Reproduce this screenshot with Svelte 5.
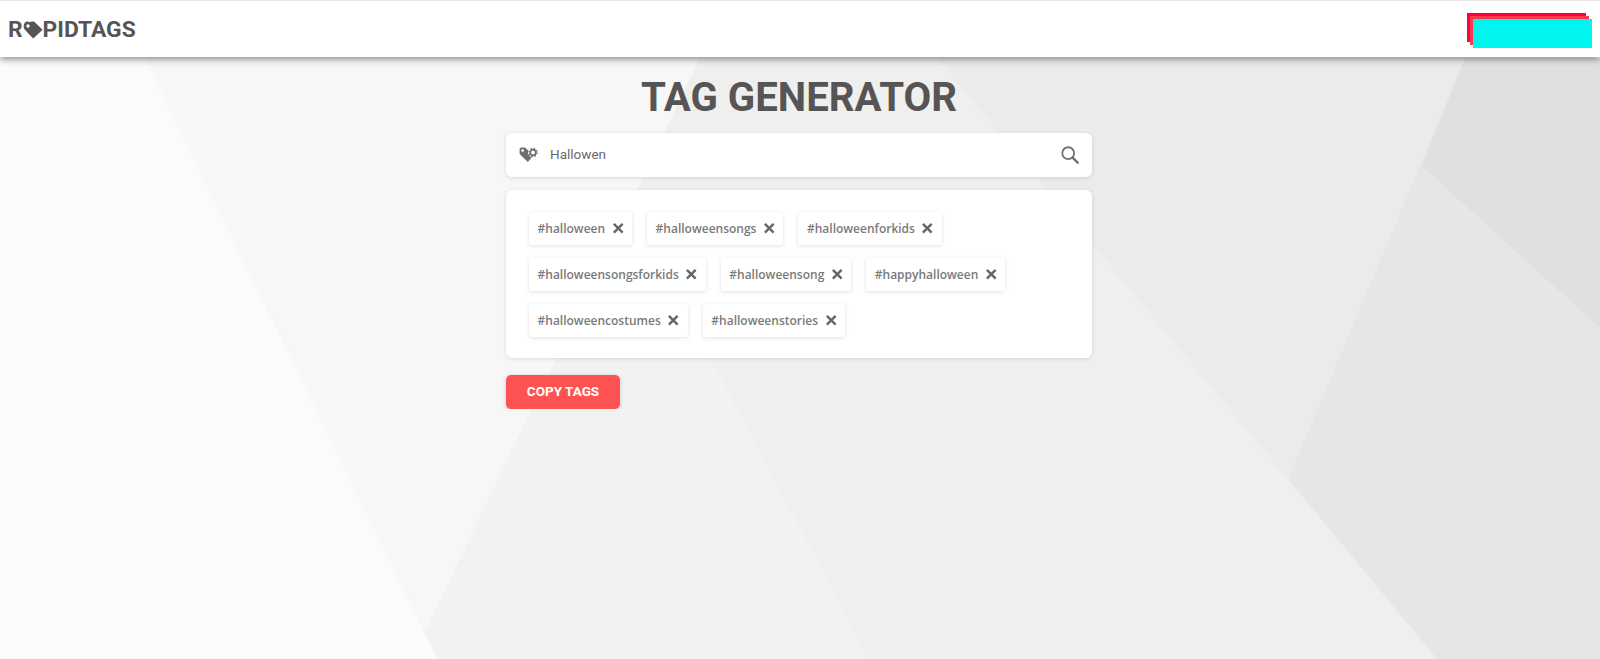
<script lang="ts">
	const tags = [
		'#halloween',
		'#halloweensongs',
		'#halloweenforkids',
		'#halloweensongsforkids',
		'#halloweensong',
		'#happyhalloween',
		'#halloweencostumes',
		'#halloweenstories'
	];
</script>

<svg class="backdrop" viewBox="0 0 1600 659" preserveAspectRatio="none" aria-hidden="true">
	<rect width="1600" height="659" fill="#fbfbfb" />
	<polygon points="145,58 1600,58 1600,659 438,659" fill="#efefed" />
	<polygon points="630,206 869,659 438,659 425,632" fill="#f2f2f0" />
	<polygon points="145,58 700,58 425,632" fill="#f7f7f7" />
	<polygon points="1288,479 1465,58 1600,58 1600,659 1437,659" fill="#e6e6e6" />
	<polygon points="937,58 1465,58 1288,479" fill="#ebebeb" />
	<polygon points="1465,58 1600,58 1600,328 1422,166" fill="#e0e0e0" />
</svg>

<header class="topbar">
	<div class="logo">
		<span>R</span>
		<svg class="logo-tag" viewBox="0 0 20 18" aria-hidden="true">
			<path d="M1.800 1.800C3 .3 5.200 .2 6.700 1.200L8.500 .4 11 .6 19.600 8.800 10.200 17.400 1.600 8.500C.2 6.600 .4 3.500 1.800 1.800Z" fill="#555" />
			<circle cx="5" cy="5" r="1.700" fill="#fff" />
		</svg>
		<span>PIDTAGS</span>
	</div>
	<div class="redacted"></div>
</header>

<main class="page">
	<h1>TAG GENERATOR</h1>

	<div class="search card">
		<svg class="search-tag" viewBox="0 0 19 16" aria-hidden="true">
			<path d="M.6 2.400C.6 1.200 1.400 .5 2.500 .5L6 .5 9.200 3.400 9 6.500 13.500 9.500 8.800 15 1.200 7.600C.7 7.100 .6 6.600 .6 6Z" fill="#6f6f6f" />
			<circle cx="3.600" cy="3.600" r="1.300" fill="#fff" />
			<circle cx="14" cy="5.500" r="4.800" fill="#fff" />
			<circle cx="14" cy="5.500" r="2.800" fill="none" stroke="#6f6f6f" stroke-width="1.800" />
			<circle cx="14" cy="5.500" r="4.100" fill="none" stroke="#6f6f6f" stroke-width="1.200" stroke-dasharray="1.600 1.620" />
		</svg>
		<span class="query">Hallowen</span>
		<svg class="search-icon" viewBox="0 0 20 20" aria-hidden="true">
			<circle cx="8" cy="8" r="6.600" fill="none" stroke="#707070" stroke-width="2" />
			<path d="M12.900 12.900 18.500 18.500" stroke="#707070" stroke-width="2.600" stroke-linecap="round" />
		</svg>
	</div>

	<div class="tags card">
		{#each tags as tag}
			<span class="tag">
				{tag}
				<svg class="remove" viewBox="0 0 12 12" aria-hidden="true">
					<path d="M1 1 11 11M11 1 1 11" stroke="#666" stroke-width="2.800" />
				</svg>
			</span>
		{/each}
	</div>

	<button class="copy">COPY TAGS</button>
</main>

<style>
	:global(body) {
		margin: 0;
		background: #fbfbfb;
	}

	.backdrop {
		position: absolute;
		top: 0;
		left: 0;
		width: 1600px;
		height: 659px;
	}

	.topbar {
		position: relative;
		display: flex;
		align-items: center;
		justify-content: space-between;
		height: 57px;
		box-sizing: border-box;
		padding: 3px 8px 0 8px;
		background: #fff;
		border-top: 1px solid #e8e8e8;
		box-shadow: 0 2px 7px rgba(70, 50, 50, 0.6);
	}

	.logo {
		display: flex;
		align-items: center;
		font: 700 22.8px/1 Roboto, sans-serif;
		color: #555;
	}

	.logo-tag {
		width: 20px;
		height: 18px;
	}

	.redacted {
		width: 119px;
		height: 29px;
		margin-top: 6px;
		background: #00f5ee;
		box-shadow: -3px -3px 0 #f93a4c, -6px -6px 0 #ff0040;
	}

	.page {
		position: relative;
		width: 586px;
		margin: 0 auto;
		padding-right: 2px;
	}

	h1 {
		margin: 18px 0 0;
		font: 700 40.2px/46px Roboto, sans-serif;
		color: #555;
		text-align: center;
		white-space: nowrap;
	}

	.card {
		background: #fff;
		border-radius: 6px;
		box-shadow: 0 1px 4px rgba(0, 0, 0, 0.12);
	}

	.search {
		display: flex;
		align-items: center;
		height: 44px;
		margin-top: 12px;
		padding: 0 13px;
	}

	.search-tag {
		width: 19px;
		height: 16px;
	}

	.query {
		flex: 1;
		margin-left: 12px;
		font: 400 13.5px/1 Roboto, sans-serif;
		color: #6a6a6a;
	}

	.search-icon {
		width: 18px;
		height: 18px;
	}

	.tags {
		display: flex;
		flex-wrap: wrap;
		gap: 13px 15px;
		margin-top: 13px;
		padding: 22px 23px 21px;
	}

	.tag {
		display: flex;
		align-items: center;
		gap: 7.5px;
		height: 33px;
		padding: 0 9px 0 8.500px;
		border-radius: 3px;
		font: 600 12px/1 "Open Sans", sans-serif;
		color: #7a7a7a;
		box-shadow: 0 1px 4px rgba(0, 0, 0, 0.12);
	}

	.remove {
		width: 10.500px;
		height: 10.500px;
		overflow: visible;
	}

	.copy {
		display: block;
		width: 114px;
		height: 34px;
		margin-top: 17px;
		padding: 0;
		border: none;
		border-radius: 5px;
		background: #ff5252;
		color: #fff;
		font: 700 13.5px/1 Roboto, sans-serif;
		box-shadow: 0 1px 4px rgba(0, 0, 0, 0.18);
	}
</style>
